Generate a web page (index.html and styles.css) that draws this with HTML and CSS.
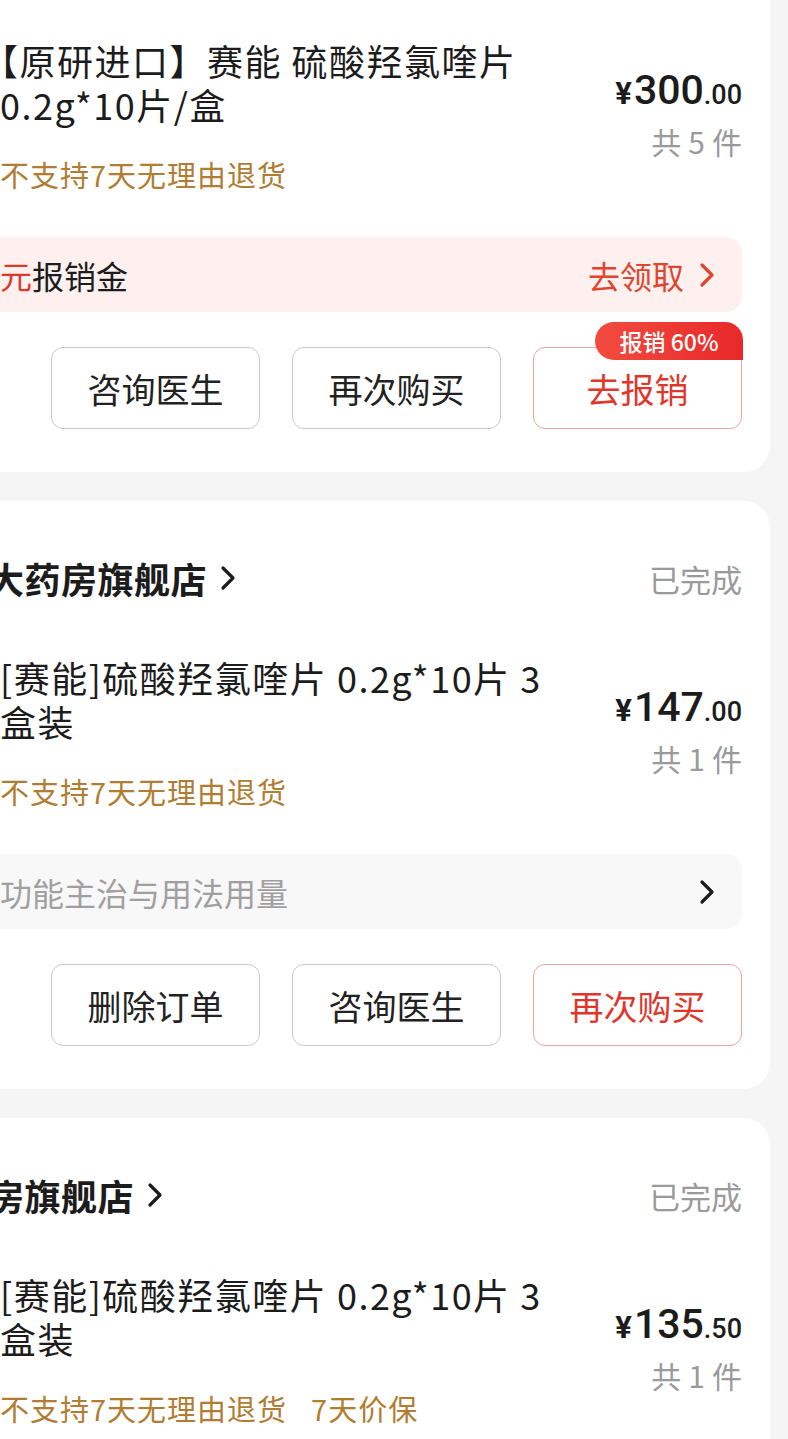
FILE: index.html
```html
<!DOCTYPE html>
<html lang="zh-CN">
<head>
    <meta charset="UTF-8">
    <meta name="viewport" content="width=device-width, initial-scale=1.0">
    <title>我的订单</title>
    <link rel="stylesheet" href="styles.css">
</head>
<body>
    <div class="list">
        <!-- 订单 1 -->
        <div class="card">
            <div class="shop-row">
                <div class="shop">大药房旗舰店
                    <svg class="arrow" viewBox="0 0 18 26"><path d="M4 3 L14 13 L4 23" /></svg>
                </div>
                <div class="status">已完成</div>
            </div>
            <div class="goods">
                <div class="info">
                    <div class="title"><span class="half">【</span>原研进口】赛能 硫酸羟氯喹片 0.2g*10片/盒</div>
                    <div class="tags"><span>不支持7天无理由退货</span></div>
                </div>
                <div class="amount">
                    <div class="price"><span class="yen">¥</span><span class="int">300</span><span class="dec">.00</span></div>
                    <div class="count">共5件</div>
                </div>
            </div>
            <div class="bar bar-pink">
                <div class="bar-text"><span class="red">元</span>报销金</div>
                <div class="bar-link">去领取
                    <svg class="arrow" viewBox="0 0 18 26"><path d="M4 3 L14 13 L4 23" /></svg>
                </div>
            </div>
            <div class="actions">
                <button class="btn">咨询医生</button>
                <button class="btn">再次购买</button>
                <button class="btn btn-red">去报销<span class="badge">报销 60%</span></button>
            </div>
        </div>

        <!-- 订单 2 -->
        <div class="card">
            <div class="shop-row">
                <div class="shop">大药房旗舰店
                    <svg class="arrow" viewBox="0 0 18 26"><path d="M4 3 L14 13 L4 23" /></svg>
                </div>
                <div class="status">已完成</div>
            </div>
            <div class="goods">
                <div class="info">
                    <div class="title">[赛能]硫酸羟氯喹片 0.2g*10片 3盒装</div>
                    <div class="tags"><span>不支持7天无理由退货</span></div>
                </div>
                <div class="amount">
                    <div class="price"><span class="yen">¥</span><span class="int">147</span><span class="dec">.00</span></div>
                    <div class="count">共1件</div>
                </div>
            </div>
            <div class="bar bar-grey">
                <div class="bar-text">功能主治与用法用量</div>
                <svg class="arrow" viewBox="0 0 18 26"><path d="M4 3 L14 13 L4 23" /></svg>
            </div>
            <div class="actions">
                <button class="btn">删除订单</button>
                <button class="btn">咨询医生</button>
                <button class="btn btn-red">再次购买</button>
            </div>
        </div>

        <!-- 订单 3 -->
        <div class="card">
            <div class="shop-row">
                <div class="shop">房旗舰店
                    <svg class="arrow" viewBox="0 0 18 26"><path d="M4 3 L14 13 L4 23" /></svg>
                </div>
                <div class="status">已完成</div>
            </div>
            <div class="goods">
                <div class="info">
                    <div class="title">[赛能]硫酸羟氯喹片 0.2g*10片 3盒装</div>
                    <div class="tags"><span>不支持7天无理由退货</span><span>7天价保</span></div>
                </div>
                <div class="amount">
                    <div class="price"><span class="yen">¥</span><span class="int">135</span><span class="dec">.50</span></div>
                    <div class="count">共1件</div>
                </div>
            </div>
            <div class="actions">
                <button class="btn">删除订单</button>
                <button class="btn">咨询医生</button>
                <button class="btn btn-red">再次购买</button>
            </div>
        </div>
    </div>
</body>
</html>
```

FILE: styles.css
```css
body {
    margin: 0;
    background-color: #f5f5f5;
    font-family: "Noto Sans CJK SC", "Noto Sans", sans-serif;
    color: #1c1c1c;
    overflow: hidden;
}
.list {
    margin: -116px 18px 0 -40px;
    display: flex;
    flex-direction: column;
    gap: 29px;
}
.card {
    background-color: #fff;
    border-radius: 26px;
    padding: 55px 28px 43px 40px;
}
.shop-row {
    display: flex;
    justify-content: space-between;
    align-items: center;
    height: 44px;
}
.shop {
    margin-left: -12px;
    font-size: 36px;
    font-weight: 700;
    letter-spacing: 0.5px;
    display: flex;
    align-items: center;
    gap: 12px;
}
.status {
    font-size: 31px;
    color: #9a9a9a;
}
.arrow {
    width: 18px;
    height: 26px;
    fill: none;
    stroke: #1c1c1c;
    stroke-width: 3.2;
    stroke-linecap: round;
    stroke-linejoin: round;
}
.goods {
    display: flex;
    justify-content: space-between;
    margin-top: 55px;
}
.info {
    width: 560px;
}
.title {
    font-size: 36px;
    line-height: 44px;
    letter-spacing: 1.5px;
}
.half {
    font-feature-settings: "halt";
}
.tags {
    margin-top: 28px;
    font-size: 29px;
    line-height: 40px;
    letter-spacing: 1px;
    color: #b07d33;
    display: flex;
    gap: 24px;
}
.amount {
    padding-top: 32px;
    text-align: right;
}
.price {
    font-family: Roboto, "Noto Sans", sans-serif;
    font-weight: 500;
    color: #1c1c1c;
    line-height: 40px;
}
.yen {
    font-size: 31px;
    font-weight: 700;
    margin-right: 2px;
}
.int {
    font-size: 41px;
}
.dec {
    font-size: 27px;
}
.count {
    margin-top: 4px;
    font-size: 30px;
    line-height: 36px;
    color: #9a9a9a;
    letter-spacing: 7px;
    margin-right: -7px;
}
.bar {
    margin: 43px 0 0 -30px;
    padding: 0 26px 0 30px;
    height: 75px;
    border-radius: 0 16px 16px 0;
    display: flex;
    justify-content: space-between;
    align-items: center;
    font-size: 32px;
}
.bar-pink {
    background-color: #fdf0ef;
}
.bar-grey {
    background-color: #f8f8f8;
    color: #a0a0a0;
}
.red {
    color: #e0372c;
}
.bar-link {
    color: #e0452f;
    display: flex;
    align-items: center;
    gap: 14px;
}
.bar-link .arrow {
    stroke: #e0452f;
}
.actions {
    margin-top: 35px;
    display: flex;
    justify-content: flex-end;
    gap: 32px;
}
.btn {
    position: relative;
    width: 209px;
    height: 82px;
    border: 1.5px solid #c9c9c9;
    border-radius: 12px;
    background-color: #fff;
    font-family: "Noto Sans CJK SC", sans-serif;
    font-size: 34px;
    color: #222;
    padding: 0;
}
.btn-red {
    border-color: #e8a6a2;
    color: #e0372c;
}
.badge {
    position: absolute;
    top: -26px;
    right: -2px;
    width: 148px;
    height: 38px;
    border-radius: 19px 18px 0 19px;
    background: linear-gradient(90deg, #f24c3f, #e8282a);
    color: #fff;
    font-size: 23px;
    font-weight: 500;
    line-height: 38px;
    text-align: center;
}
```
